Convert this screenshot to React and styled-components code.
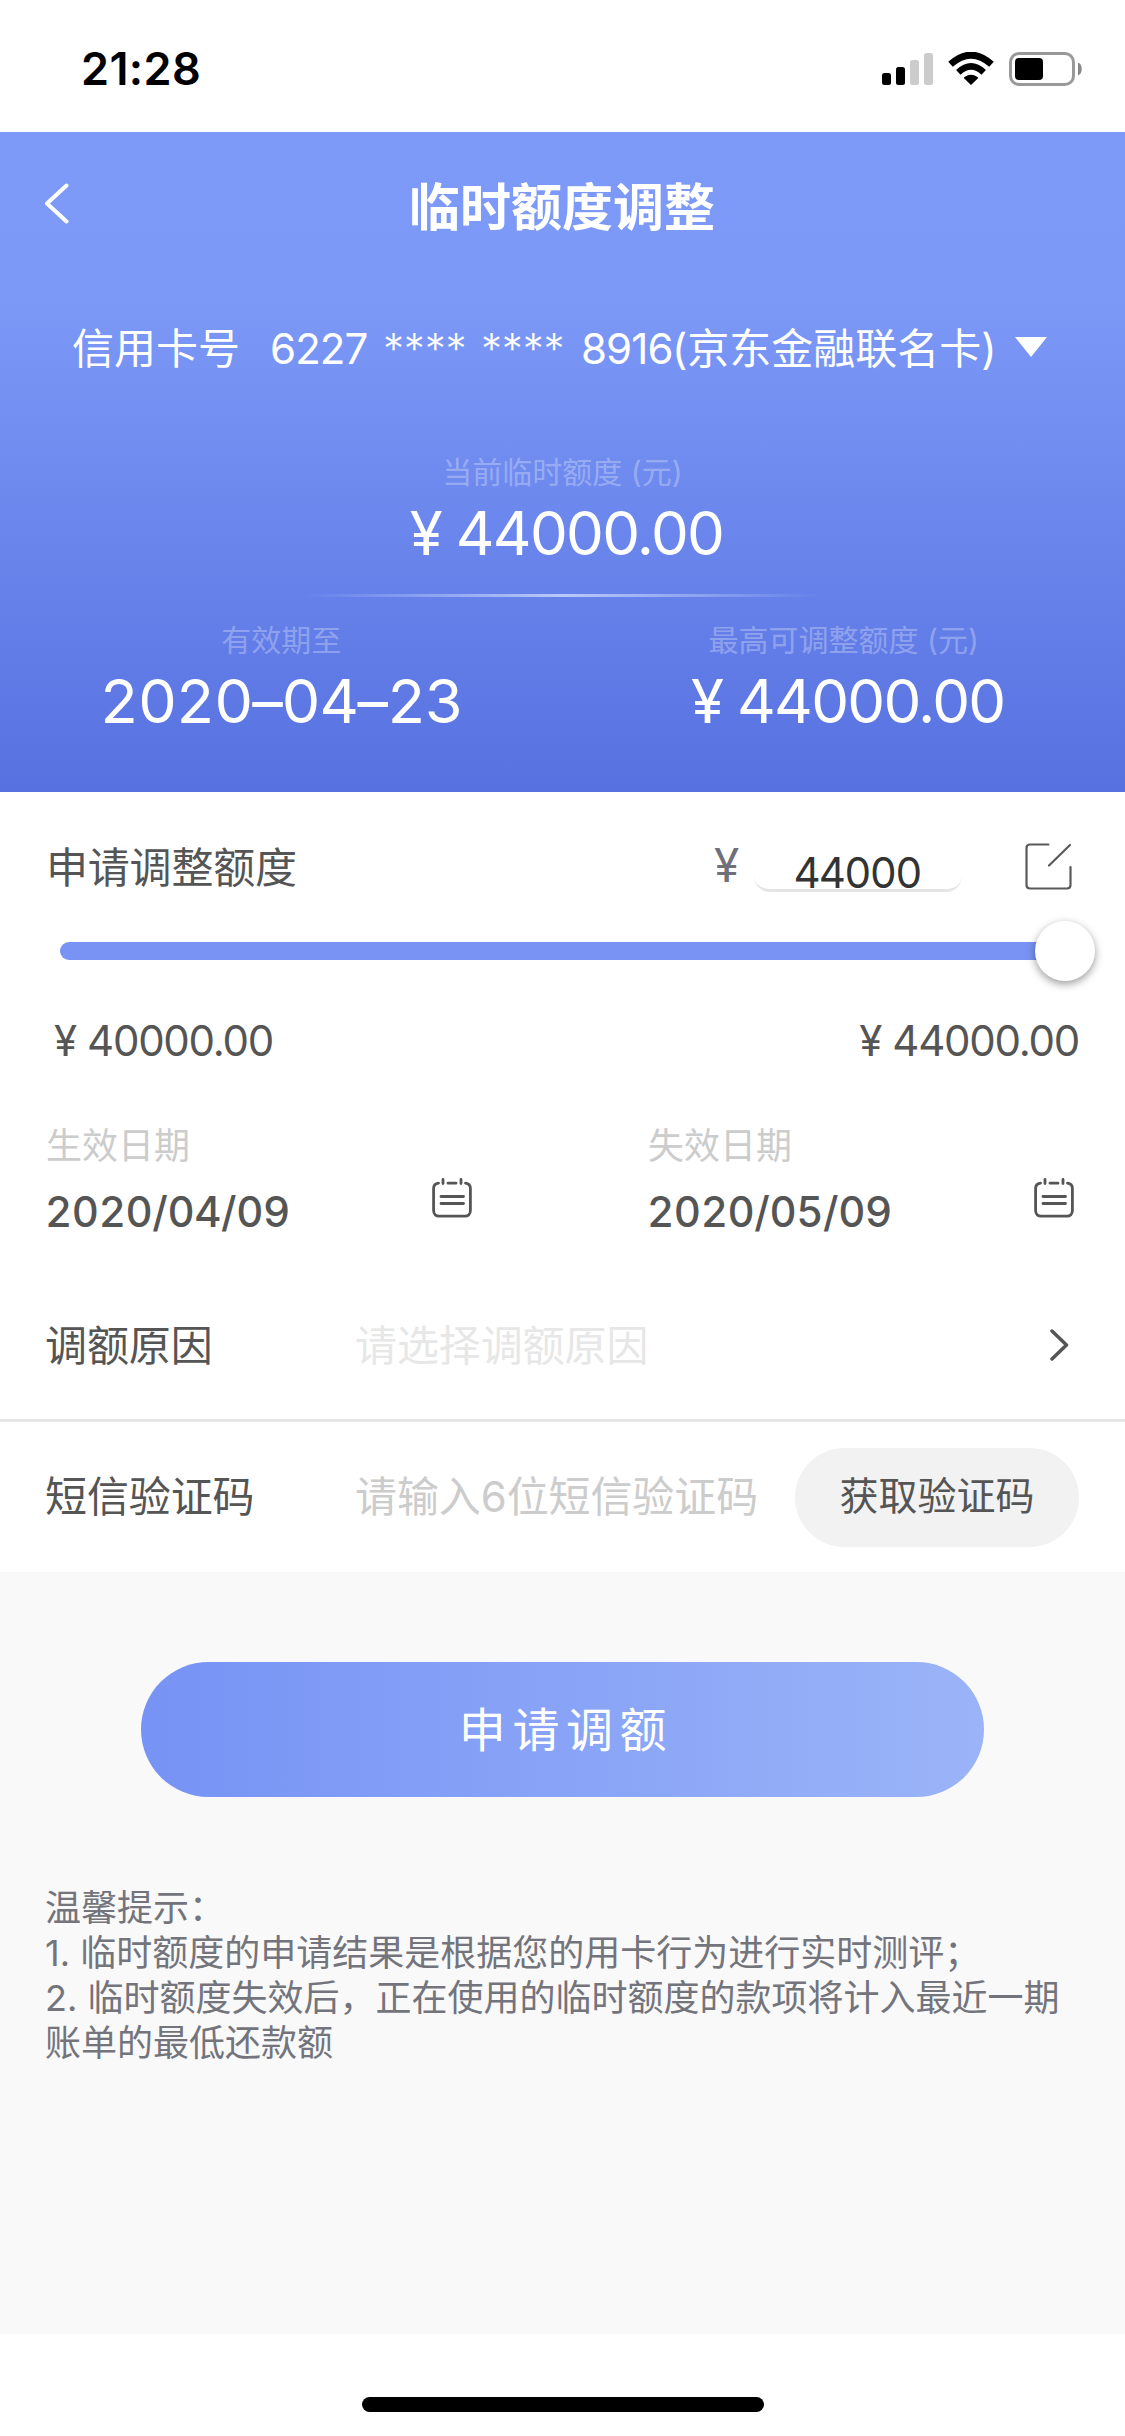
import React from "react";
import styled, { createGlobalStyle } from "styled-components";

const GlobalStyle = createGlobalStyle`
  * { box-sizing: border-box; }
  body {
    margin: 0;
    background: #fff;
    font-family: Inter, "Noto Sans CJK SC", sans-serif;
    font-size: 42px;
    line-height: 60px;
    color: #555;
  }
  button, input { font: inherit; color: inherit; border: 0; padding: 0; margin: 0; }
`;

const Screen = styled.div`
  width: 1125px;
  height: 2436px;
  display: flex;
  flex-direction: column;
  background: #fff;
  white-space: nowrap;
  overflow: hidden;
`;

const StatusBar = styled.div`
  height: 132px;
  padding: 39px 43px 0 81px;
  display: flex;
  justify-content: space-between;
  align-items: flex-start;
`;

const Clock = styled.span`
  font-size: 45px;
  font-weight: 600;
  letter-spacing: 0.4px;
  color: #000;
`;

const StatusIcons = styled.svg`
  display: block;
  margin-top: 13px;
`;

const Hero = styled.header`
  height: 660px;
  color: #fff;
  background: linear-gradient(180deg, #7d9af8 0%, #7c99f7 25%, #5771e0 100%);
`;

const NavBar = styled.div`
  height: 150px;
  padding: 2px 45px 0 44px;
  display: grid;
  grid-template-columns: 60px 1fr 60px;
  align-items: center;
`;

const BackButton = styled.button`
  background: none;
  display: flex;
  padding-bottom: 10px;
`;

const Title = styled.h1`
  margin: 0;
  text-align: center;
  font-size: 51px;
  font-weight: 600;
`;

const CardRow = styled.div`
  height: 132px;
  padding: 1px 0 0 72px;
  display: flex;
  align-items: center;
`;

const CardLabel = styled.span`
  width: 198px;
`;

const CardDigits = styled.span`
  width: ${(p) => p.$width}px;
  letter-spacing: -0.9px;
`;

const CardMask = styled.span`
  width: ${(p) => p.$width}px;
  font-weight: 300;
  letter-spacing: -0.2px;
`;

const Caret = styled.svg`
  margin-left: 18px;
  margin-bottom: 3px;
`;

const Figure = styled.div`
  display: flex;
  flex-direction: column;
  align-items: center;
`;

const FigureLabel = styled.span`
  font-size: 30px;
  line-height: 44px;
  color: rgba(255, 255, 255, 0.3);
`;

const FigureValue = styled.span`
  margin-top: 3px;
  padding-left: ${(p) => (p.$tabular ? 0 : 8)}px;
  display: flex;
  font-size: ${(p) => (p.$tabular ? 61 : 60)}px;
  line-height: 72px;
  letter-spacing: ${(p) => (p.$tabular ? "-1.4px" : "-1.7px")};
  font-variant-numeric: ${(p) => (p.$tabular ? "tabular-nums" : "normal")};
`;

const CurrentLimit = styled(Figure)`
  padding-top: 36px;
  height: 180px;
`;

const Rule = styled.div`
  width: 516px;
  height: 3px;
  margin: 0 auto;
  background: linear-gradient(90deg, rgba(190, 208, 248, 0), rgba(190, 208, 248, 0.92), rgba(190, 208, 248, 0));
`;

const FigurePair = styled.div`
  padding-top: 21px;
  display: grid;
  grid-template-columns: 1fr 1fr;
`;

const Yuan = styled.span`
  width: ${(p) => p.$width}px;
`;

const Form = styled.main`
  height: 780px;
  background: #fff;
`;

const AmountRow = styled.div`
  height: 150px;
  padding: 0 53px 0 46px;
  display: flex;
  align-items: center;
`;

const AmountLabel = styled.label`
  flex: 1;
  padding-top: 1px;
  letter-spacing: -0.2px;
`;

const AmountUnit = styled.span`
  width: 40px;
  padding-bottom: 5px;
  font-size: 46px;
  color: #6f7079;
`;

const AmountBox = styled.div`
  width: 208px;
  height: 50px;
  border-bottom: 3px solid #e5e5e5;
  border-radius: 16px;
  padding-right: 2px;
  line-height: 62px;
  text-align: center;
  color: #333;
  letter-spacing: -1.8px;
  font-variant-numeric: tabular-nums;
`;

const EditIcon = styled.svg`
  margin-left: 63px;
  margin-bottom: 2px;
`;

const SliderRow = styled.div`
  height: 18px;
  margin: 0 60px;
  display: flex;
  align-items: center;
  border-radius: 9px;
  background: #7893f3;
`;

const Thumb = styled.span`
  flex: none;
  width: 60px;
  height: 60px;
  margin-left: auto;
  margin-right: -30px;
  border-radius: 50%;
  background: #fff;
  box-shadow: 0 3px 8px rgba(0, 0, 0, 0.4);
`;

const RangeRow = styled.div`
  height: 162px;
  padding: 0 46px 0 54px;
  display: flex;
  justify-content: space-between;
  align-items: center;
  letter-spacing: -1.25px;
`;

const Price = styled.span`
  display: flex;
`;

const DateRow = styled.div`
  height: 150px;
  display: grid;
  grid-template-columns: 602px 1fr;
`;

const DateField = styled.div`
  padding-left: 46px;
  padding-right: ${(p) => p.$right}px;
  display: flex;
  justify-content: space-between;
`;

const DateLabel = styled.div`
  font-size: 36px;
  line-height: 48px;
  color: #ccc;
`;

const DateValue = styled.div`
  margin: 12px 0 0 -1px;
  font-weight: 500;
  letter-spacing: -0.4px;
  font-variant-numeric: tabular-nums;
`;

const DateIcon = styled.svg`
  margin-top: 56px;
`;

const FieldRow = styled.div`
  height: ${(p) => p.$height}px;
  padding: 0 46px 0 45px;
  display: flex;
  align-items: center;
  letter-spacing: -0.1px;
  border-bottom: ${(p) => (p.$divided ? "3px solid #e5e5e5" : "0")};
`;

const FieldLabel = styled.span`
  width: 310px;
`;

const Placeholder = styled.span`
  flex: 1;
  color: ${(p) => (p.$faint ? "#e7e7e7" : "#ccc")};
`;

const Chevron = styled.svg`
  margin-right: 10px;
  margin-bottom: 2px;
`;

const CodeButton = styled.button`
  width: 284px;
  height: 99px;
  border-radius: 50px;
  background: #f2f2f2;
  font-size: 39px;
  padding-bottom: 2px;
`;

const Footer = styled.section`
  height: 762px;
  padding: 90px 45px 0;
  background: #f9f9f9;
`;

const SubmitButton = styled.button`
  display: block;
  width: 843px;
  height: 135px;
  margin: 0 auto;
  padding-left: 7px;
  border-radius: 68px;
  background: linear-gradient(90deg, #7693f5, #9bb4f8);
  color: #fff;
  font-size: 47px;
  letter-spacing: 6.6px;
`;

const Tips = styled.div`
  margin-top: 89px;
  font-size: 36px;
  line-height: 45px;
  color: #73747c;
`;

const TipLine = styled.p`
  margin: 0;
`;

const HomeIndicator = styled.div`
  width: 402px;
  height: 15px;
  margin: 63px auto 0;
  border-radius: 8px;
  background: #000;
`;

const CalendarIcon = () => (
  <DateIcon width="40" height="40" viewBox="0 0 40 40" fill="none" stroke="#555" strokeWidth="2.8" strokeLinecap="round">
    <path d="M6.5 5.2C3.5 5.6 1.6 7.6 1.6 10.5V32.5C1.6 36 3.8 38.2 7.2 38.2H32.8C36.2 38.2 38.4 36 38.4 32.5V10.5C38.4 7.6 36.5 5.6 33.5 5.2" />
    <path d="M11 1.5V5.5M29 1.5V5.5M16 5.2H24M9 18.5H31.5M9 25.5H31.5" />
  </DateIcon>
);

const Money = ({ value, yuanWidth }) => (
  <>
    <Yuan $width={yuanWidth}>¥</Yuan>
    <span>{value}</span>
  </>
);

export default function App() {
  return (
    <>
      <GlobalStyle />
      <Screen>
        <StatusBar>
          <Clock>21:28</Clock>
          <StatusIcons width="201" height="34" viewBox="0 0 201 34">
            <rect x="1" y="21" width="9" height="12" rx="2.5" />
            <rect x="15" y="15" width="9" height="18" rx="2.5" />
            <rect x="29" y="8" width="9" height="25" rx="2.5" fill="#ccc" />
            <rect x="43" y="1" width="9" height="32" rx="2.5" fill="#ccc" />
            <path d="M90 33L83 26.2Q82.7 25.5 83.5 25Q90 20.5 96.5 25Q97.3 25.5 97 26.2Z" />
            <path d="M77.3 20.3Q90 8.5 102.7 20.3" fill="none" stroke="#000" strokeWidth="6.5" />
            <path d="M69.5 12.3Q90 -6 110.5 12.3" fill="none" stroke="#000" strokeWidth="6.8" />
            <rect x="129.5" y="1.5" width="63" height="31" rx="8.5" fill="none" stroke="#999" strokeWidth="3" />
            <rect x="134" y="6" width="28" height="22" rx="4" />
            <path d="M197 10.5C202 12.5 202 21.5 197 23.5Z" fill="#888" />
          </StatusIcons>
        </StatusBar>

        <Hero>
          <NavBar>
            <BackButton aria-label="返回">
              <svg width="25" height="41" viewBox="0 0 25 41" fill="none" stroke="#fff" strokeWidth="4" strokeLinecap="round" strokeLinejoin="round">
                <path d="M22.5 2.5L3 20.5L22.5 38.5" />
              </svg>
            </BackButton>
            <Title>临时额度调整</Title>
          </NavBar>

          <CardRow>
            <CardLabel>信用卡号</CardLabel>
            <CardDigits $width={113}>6227</CardDigits>
            <CardMask $width={98}>****</CardMask>
            <CardMask $width={100}>****</CardMask>
            <CardDigits $width={91}>8916</CardDigits>
            <span>(京东金融联名卡)</span>
            <Caret width="32" height="20" viewBox="0 0 32 20" fill="#fff">
              <path d="M0 0H32L16 20Z" />
            </Caret>
          </CardRow>

          <CurrentLimit>
            <FigureLabel>当前临时额度 (元)</FigureLabel>
            <FigureValue>
              <Money value="44000.00" yuanWidth={46} />
            </FigureValue>
          </CurrentLimit>
          <Rule />
          <FigurePair>
            <Figure>
              <FigureLabel>有效期至</FigureLabel>
              <FigureValue $tabular>2020–04–23</FigureValue>
            </Figure>
            <Figure>
              <FigureLabel>最高可调整额度 (元)</FigureLabel>
              <FigureValue>
                <Money value="44000.00" yuanWidth={46} />
              </FigureValue>
            </Figure>
          </FigurePair>
        </Hero>

        <Form>
          <AmountRow>
            <AmountLabel>申请调整额度</AmountLabel>
            <AmountUnit>¥</AmountUnit>
            <AmountBox>44000</AmountBox>
            <EditIcon width="47" height="47" viewBox="0 0 47 47" fill="none" stroke="#5a5a5a" strokeWidth="2.2" strokeLinecap="round" strokeLinejoin="round">
              <path d="M23.5 1.5H5Q1.5 1.5 1.5 5V42Q1.5 45.5 5 45.5H42Q45.5 45.5 45.5 42V24" />
              <path d="M45 2L24 22.5" />
            </EditIcon>
          </AmountRow>
          <SliderRow>
            <Thumb />
          </SliderRow>
          <RangeRow>
            <Price><Money value="40000.00" yuanWidth={33} /></Price>
            <Price><Money value="44000.00" yuanWidth={33} /></Price>
          </RangeRow>

          <DateRow>
            <DateField $right={130}>
              <div>
                <DateLabel>生效日期</DateLabel>
                <DateValue>2020/04/09</DateValue>
              </div>
              <CalendarIcon />
            </DateField>
            <DateField $right={51}>
              <div>
                <DateLabel>失效日期</DateLabel>
                <DateValue>2020/05/09</DateValue>
              </div>
              <CalendarIcon />
            </DateField>
          </DateRow>

          <FieldRow $height={150} $divided>
            <FieldLabel>调额原因</FieldLabel>
            <Placeholder $faint>请选择调额原因</Placeholder>
            <Chevron width="19" height="32" viewBox="0 0 19 32" fill="none" stroke="#555" strokeWidth="3.5" strokeLinecap="round" strokeLinejoin="round">
              <path d="M2 2L16.5 16L2 30" />
            </Chevron>
          </FieldRow>
          <FieldRow $height={150}>
            <FieldLabel>短信验证码</FieldLabel>
            <Placeholder>请输入6位短信验证码</Placeholder>
            <CodeButton>获取验证码</CodeButton>
          </FieldRow>
        </Form>

        <Footer>
          <SubmitButton>申请调额</SubmitButton>
          <Tips>
            <TipLine>温馨提示：</TipLine>
            <TipLine>1. 临时额度的申请结果是根据您的用卡行为进行实时测评；</TipLine>
            <TipLine>2. 临时额度失效后，正在使用的临时额度的款项将计入最近一期</TipLine>
            <TipLine>账单的最低还款额</TipLine>
          </Tips>
        </Footer>
        <HomeIndicator />
      </Screen>
    </>
  );
}
